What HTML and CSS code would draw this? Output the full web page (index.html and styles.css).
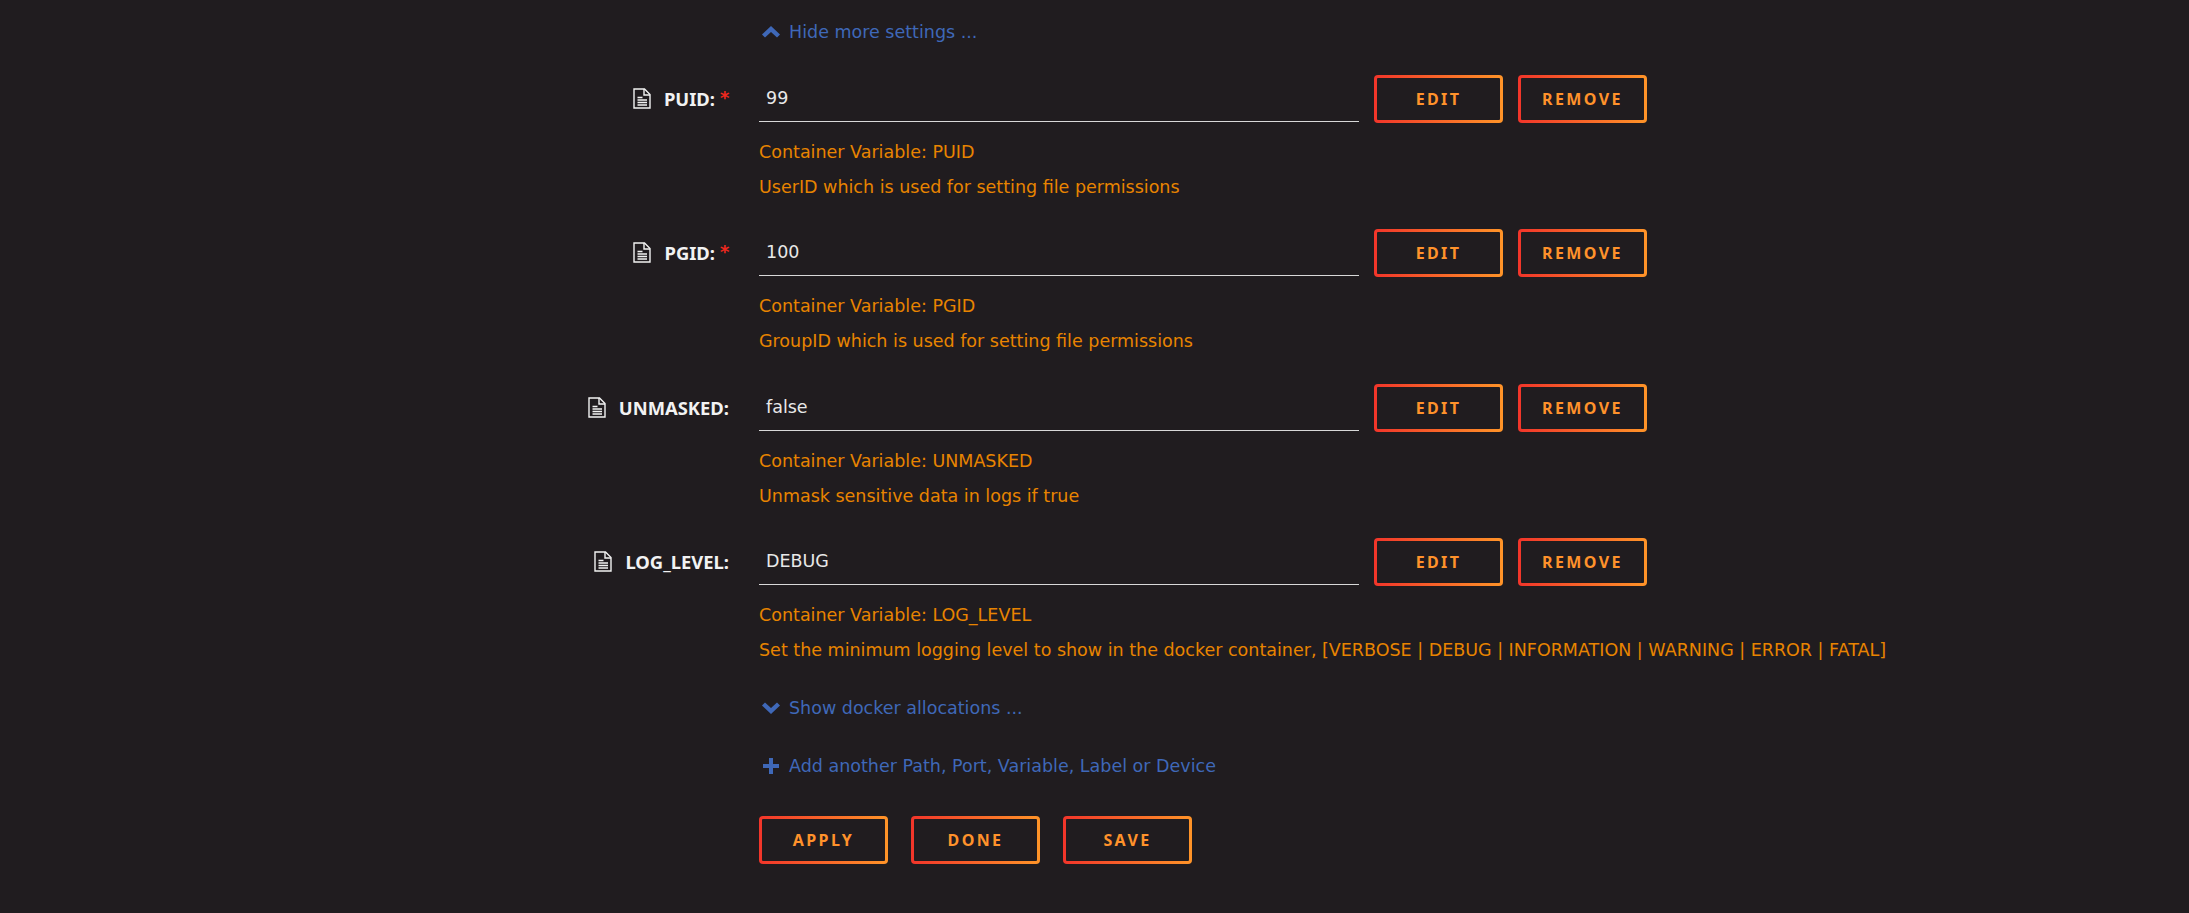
FILE: index.html
```html
<!DOCTYPE html>
<html lang="en">
<head>
<meta charset="utf-8">
<title>Container settings</title>
<link rel="stylesheet" href="styles.css">
</head>
<body>
<svg class="defs" width="0" height="0" aria-hidden="true">
  <symbol id="file" viewBox="0 0 18 21">
    <path d="M1 1h10.500l5.500 5.500V20H1z" fill="none" stroke="currentColor" stroke-width="1.4"/>
    <path d="M11 1v6h6" fill="none" stroke="currentColor" stroke-width="1.4"/>
    <path d="M4.500 9.500h5M4.500 12h9.500M4.500 14.500h9.500M4.500 17h9.500" stroke="currentColor" stroke-width="1.4"/>
  </symbol>
</svg>
<main class="form">
  <div class="link-row link-first">
    <svg class="link-icon" viewBox="0 0 18 12"><path d="M0 8.500 9 0l9 8.500-3 3-6-5.600-6 5.600z" fill="currentColor"/></svg>
    <span>Hide more settings ...</span>
  </div>

  <section class="setting">
    <div class="field">
      <label class="name"><svg class="file"><use href="#file"/></svg><b>PUID:</b><i class="req">*</i></label>
      <div class="value">99</div>
      <div class="actions"><button class="btn"><span>EDIT</span></button><button class="btn"><span>REMOVE</span></button></div>
    </div>
    <p class="note">Container Variable: PUID</p>
    <p class="note">UserID which is used for setting file permissions</p>
  </section>

  <section class="setting">
    <div class="field">
      <label class="name"><svg class="file"><use href="#file"/></svg><b>PGID:</b><i class="req">*</i></label>
      <div class="value">100</div>
      <div class="actions"><button class="btn"><span>EDIT</span></button><button class="btn"><span>REMOVE</span></button></div>
    </div>
    <p class="note">Container Variable: PGID</p>
    <p class="note">GroupID which is used for setting file permissions</p>
  </section>

  <section class="setting">
    <div class="field">
      <label class="name"><svg class="file"><use href="#file"/></svg><b>UNMASKED:</b></label>
      <div class="value">false</div>
      <div class="actions"><button class="btn"><span>EDIT</span></button><button class="btn"><span>REMOVE</span></button></div>
    </div>
    <p class="note">Container Variable: UNMASKED</p>
    <p class="note">Unmask sensitive data in logs if true</p>
  </section>

  <section class="setting setting-last">
    <div class="field">
      <label class="name"><svg class="file"><use href="#file"/></svg><b>LOG_LEVEL:</b></label>
      <div class="value">DEBUG</div>
      <div class="actions"><button class="btn"><span>EDIT</span></button><button class="btn"><span>REMOVE</span></button></div>
    </div>
    <p class="note">Container Variable: LOG_LEVEL</p>
    <p class="note">Set the minimum logging level to show in the docker container, [VERBOSE | DEBUG | INFORMATION | WARNING | ERROR | FATAL]</p>
  </section>

  <div class="link-row link-docker">
    <svg class="link-icon" viewBox="0 0 18 12"><path d="M0 3.500 9 12l9-8.500-3-3-6 5.600L3 .5z" fill="currentColor"/></svg>
    <span>Show docker allocations ...</span>
  </div>
  <div class="link-row link-add">
    <svg class="link-icon plus" viewBox="0 0 18 16"><path d="M7 0h4v6h6v4h-6v6H7v-6H1V6h6z" fill="currentColor"/></svg>
    <span>Add another Path, Port, Variable, Label or Device</span>
  </div>

  <div class="footer">
    <button class="btn"><span>APPLY</span></button>
    <button class="btn"><span>DONE</span></button>
    <button class="btn"><span>SAVE</span></button>
  </div>
</main>
</body>
</html>
```
FILE: styles.css
```css
* { box-sizing: border-box; }
html, body { margin: 0; height: 100%; }
body {
  background: #201c1f;
  color: #f2f2f2;
  font-family: "DejaVu Sans", "Noto Sans", sans-serif;
  font-size: 17.5px;
  overflow: hidden;
}
.defs { position: absolute; }
.form { padding-left: 759px; padding-top: 21px; }

.link-row {
  display: flex;
  align-items: center;
  height: 22px;
  color: #3f68b8;
}
.link-icon { width: 18px; height: 12px; margin: 0 9px 0 3px; flex: none; }
.plus { height: 16px; }
.link-first { margin-bottom: 32px; }
.link-docker { margin-top: 13px; }
.link-add { margin-top: 36px; }

.setting { height: 154.4px; }
.setting-last { height: 146px; }
.field { display: flex; align-items: flex-start; position: relative; height: 48px; margin-bottom: 9px; }
.name {
  position: absolute;
  right: 100%;
  margin-right: 30px;
  top: 11px;
  display: flex;
  align-items: center;
  white-space: nowrap;
}
.name b { font: 700 18.4px "Noto Sans", sans-serif; }
.file { width: 18px; height: 21px; margin-right: 13px; color: #f2f2f2; }
.req { color: #f0281e; font: 700 18px "DejaVu Sans", sans-serif; margin-left: 5px; position: relative; top: -1px; width: 9px; }
.value {
  width: 600px;
  height: 47px;
  border-bottom: 1px solid #d8d8d8;
  padding: 12px 7px 0;
  line-height: 22px;
  color: #e8e8e8;
}
.actions { display: flex; gap: 15px; margin-left: 15px; }

.note { margin: 0; height: 35px; line-height: 22px; padding-top: 9px; color: #e88400; white-space: nowrap; }

.btn {
  width: 129px;
  height: 48px;
  border: 3px solid transparent;
  border-radius: 4px;
  background:
    linear-gradient(#201c1f, #201c1f) padding-box,
    linear-gradient(90deg, #f2352a, #ff9428) border-box;
  color: #ff922b;
  font: 700 16px "Noto Sans", sans-serif;
  letter-spacing: 2.400px;
  padding: 0;
}
.footer { display: flex; gap: 23px; margin-top: 39px; }
```
